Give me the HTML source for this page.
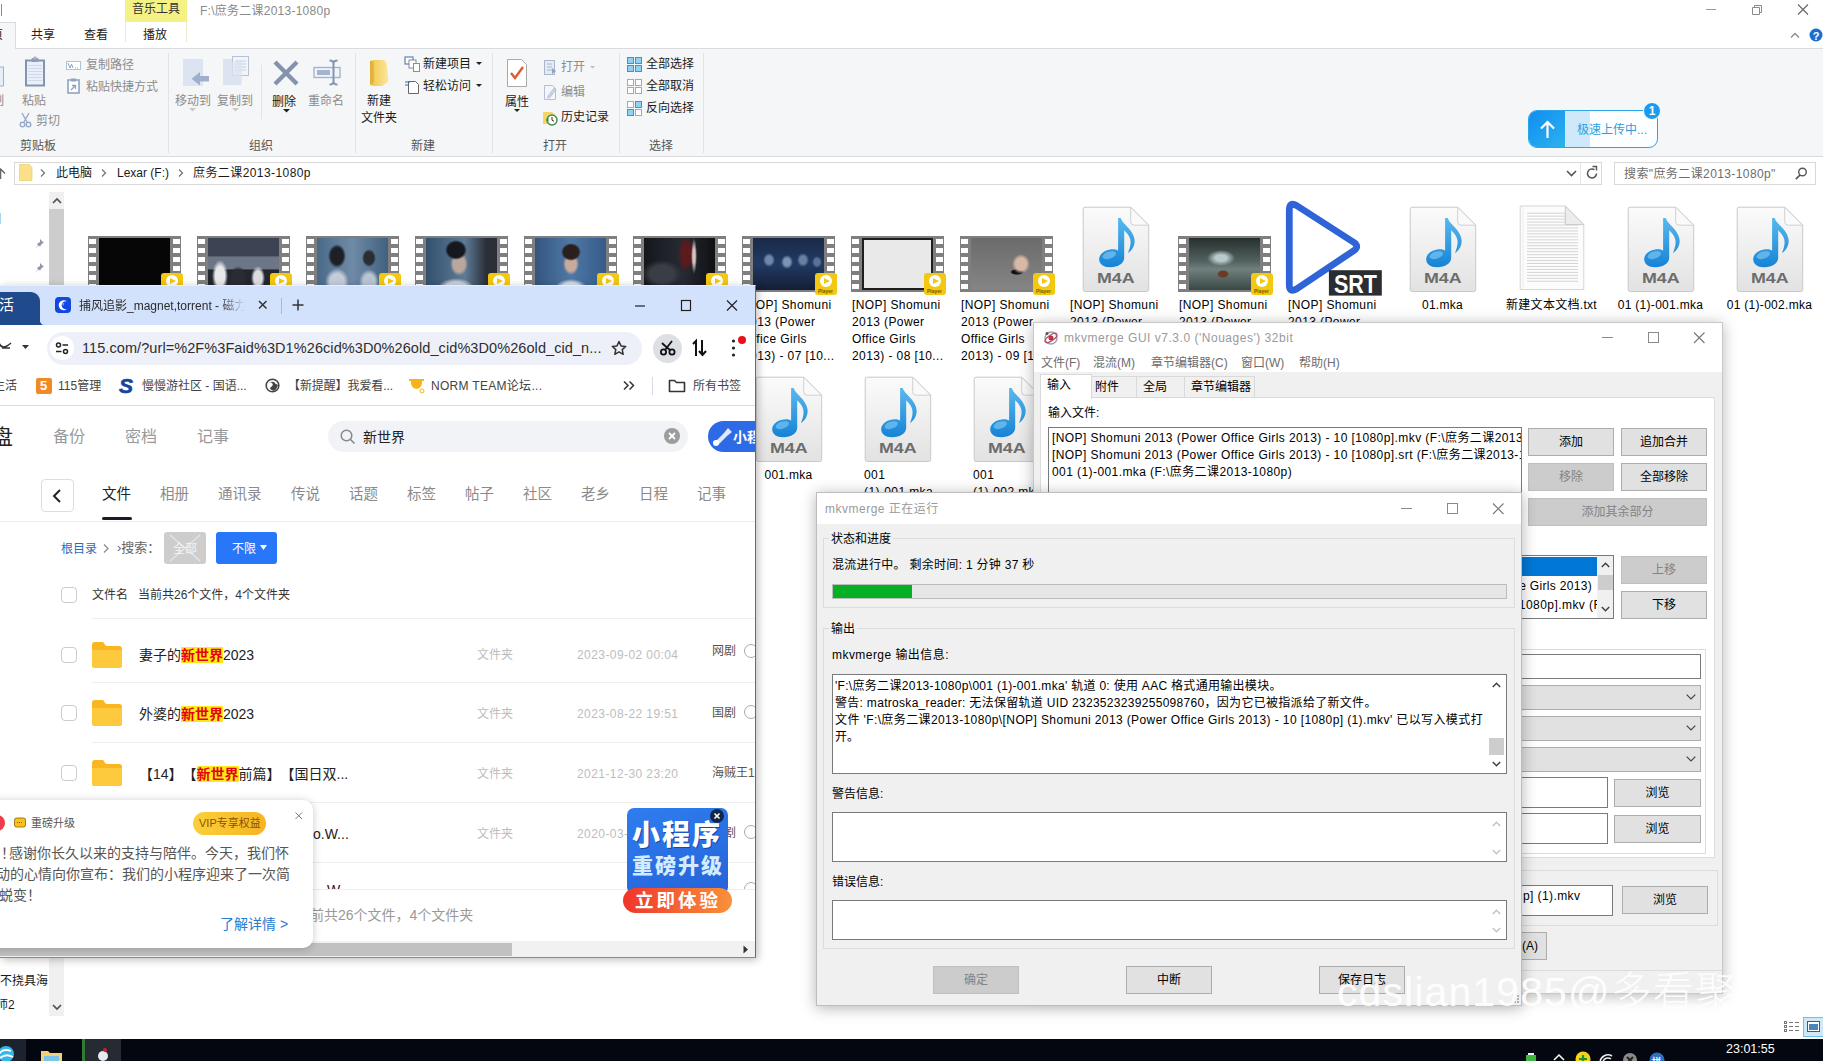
<!DOCTYPE html>
<html lang="zh-CN"><head><meta charset="utf-8"><title>screenshot</title>
<style>
*{box-sizing:border-box;margin:0;padding:0}
html,body{width:1823px;height:1061px;overflow:hidden;background:#fff}
body{position:relative;font-family:"Liberation Sans","Noto Sans CJK SC",sans-serif;font-size:12px;color:#000;line-height:1}
.a{position:absolute}
.t{position:absolute;white-space:nowrap;line-height:16px;height:16px}
.g{color:#8c8c8c}
svg{position:absolute;overflow:visible}
.sep{position:absolute;width:1px;background:#e2e3e4;top:53px;height:100px}
.fl{position:absolute;width:109px;text-align:center;font-size:12px;line-height:17px;color:#000;letter-spacing:.3px}
.fl2{position:absolute;width:96px;text-align:left;font-size:12px;line-height:17px;color:#000;letter-spacing:.4px}
.vt{position:absolute;width:93px;height:56px;background:#7f7f7f}
.vt i{position:absolute;left:11px;top:2px;width:71px;height:52px;display:block}
.vt b{position:absolute;top:0;width:7px;height:56px;background:repeating-linear-gradient(180deg,#7f7f7f 0 3px,#fff 3px 7.800px,#7f7f7f 7.800px 9px)}
.pb{position:absolute;width:22px;height:22px;border-radius:3px;background:#f3c811}
.pb:before{content:"";position:absolute;left:5px;top:2px;width:12px;height:12px;border-radius:50%;background:#fff}
.pb:after{content:"";position:absolute;left:9px;top:5px;border-left:6px solid #f3c811;border-top:3px solid transparent;border-bottom:3px solid transparent}
.btn{position:absolute;background:#e1e1e1;border:1px solid #adadad;text-align:center;font-size:12px;color:#000}
.btn.dis{background:#ccc;border-color:#bfbfbf;color:#838383}
.ct{top:199px;font-size:14.500px;color:#8a8a8a;line-height:18px;height:18px}
.cb{position:absolute;left:61px;width:16px;height:16px;border:1px solid #ccc;border-radius:4px;background:#fff}
.hl{left:92px;width:664px;height:1px;background:#eee}
.fn{left:139px;font-size:14px;color:#222;line-height:20px;height:20px;text-spacing-trim:space-all}
.fn b{background:#ffe81a;color:#e60012;font-weight:bold}
.fk{left:477px;color:#bdbdbd}
.fd{left:577px;color:#bdbdbd;letter-spacing:.42px}
.ic{left:744px;width:14px;height:14px;border-radius:50%;border:1px solid #aaa}
.dd{left:300px;width:364px;height:25px;background:#e1e1e1;border:1px solid #adadad}
</style></head><body>
<svg width="0" height="0" style="position:absolute">
<defs>
<linearGradient id="pg" x1="0" y1="0" x2="0" y2="1"><stop offset="0" stop-color="#fbfbfb"/><stop offset="1" stop-color="#e2e2e2"/></linearGradient>
<linearGradient id="nt" x1="0" y1="0" x2="0" y2="1"><stop offset="0" stop-color="#5ab9ee"/><stop offset="1" stop-color="#1583d6"/></linearGradient>
<symbol id="m4a" viewBox="0 0 68 87">
<g transform="translate(1.200 1.200)">
<path d="M0 2Q0 0 2 0H47.500L65.500 18V82.300Q65.500 84.300 63.500 84.300H2Q0 84.300 0 82.300Z" fill="url(#pg)" stroke="#c9c9c9" stroke-width="1"/>
<path d="M47.500 0L65.500 18H51Q47.500 18 47.500 14.500Z" fill="#fafafa" stroke="#d0d0d0" stroke-width="1"/>
<path d="M34.900 10.800L37.500 10.800C39 17 50 22 51.400 32.500C52 39 48 44 44.800 45.700C47 40 48 36 47 32C46 28 43 25 41 23L41 50.500C41 56 35 60 27 60C20 60 16 56.500 16 52C16 46 23 42 30 42C32 42 34 42.500 34.900 43.500Z" fill="url(#nt)"/>
<ellipse cx="26" cy="48" rx="7" ry="3.500" fill="#8fd2f7" opacity=".55" transform="rotate(-18 26 48)"/>
<text x="13.700" y="76.300" font-family="Liberation Sans,sans-serif" font-weight="bold" font-size="14.400" fill="#6c6c6c" textLength="37.700" lengthAdjust="spacingAndGlyphs">M4A</text>
</g>
</symbol>
<symbol id="fold" viewBox="0 0 30 26">
<path d="M0 3 Q0 0 3 0 H11 L14 4 H27 Q30 4 30 7 V23 Q30 26 27 26 H3 Q0 26 0 23 Z" fill="#f9b621"/>
<path d="M0 8 H30 V23 Q30 26 27 26 H3 Q0 26 0 23 Z" fill="#fdc93d"/>
</symbol>
</defs></svg>
<!-- ================= EXPLORER ================= -->
<div class="a" id="exp" style="left:0;top:0;width:1823px;height:1039px;background:#fff">
<!-- title -->
<div class="a" style="left:125px;top:0;width:62px;height:22px;background:#f4f285"></div>
<div class="t" style="left:132px;top:1px;color:#333">音乐工具</div>
<div class="t" style="left:200px;top:3px;color:#8a8a8a;letter-spacing:.25px">F:\庶务二课2013-1080p</div>
<svg style="left:1706px;top:4px" width="110" height="12"><path d="M0 5.500H10" stroke="#9a9a9a" stroke-width="1" fill="none"/><path d="M46.500 3.500h7v7h-7z M48.500 3.500v-2h7v7h-2" stroke="#8a8a8a" stroke-width="1" fill="none"/><path d="M92 0.500l10 10M102 0.500l-10 10" stroke="#666" stroke-width="1.100" fill="none"/></svg>
<div class="a" style="left:1px;top:4px;width:1px;height:12px;background:#8a8a8a"></div>
<!-- tab row -->
<div class="a" style="left:0;top:22px;width:16px;height:27px;background:#f5f6f7;border:1px solid #dadbdc;border-bottom:none;border-left:none"></div>
<div class="t" style="left:-21px;top:27px;color:#222">主页</div>
<div class="t" style="left:31px;top:27px;color:#222">共享</div>
<div class="t" style="left:84px;top:27px;color:#222">查看</div>
<div class="a" style="left:125px;top:22px;width:62px;height:20px;border-left:1px solid #ebebd2;border-right:1px solid #ebebd2"></div>
<div class="t" style="left:143px;top:27px;color:#222">播放</div>
<svg style="left:1790px;top:28px" width="33" height="16"><path d="M1 9.500l4-4 4 4" stroke="#8a8a8a" stroke-width="1.300" fill="none"/><circle cx="26" cy="7" r="6.500" fill="#1b6ed0"/><text x="26" y="11.500" font-size="11" font-weight="bold" fill="#fff" text-anchor="middle" font-family="Liberation Sans,sans-serif">?</text></svg>
<!-- ribbon body -->
<div class="a" style="left:0;top:48px;width:1823px;height:109px;background:#f5f6f7;border-top:1px solid #dadbdc;border-bottom:1px solid #dadbdc"></div>
<div class="a" style="left:0px;top:48px;width:15px;height:1px;background:#f5f6f7"></div>
<!-- clipboard group -->
<svg style="left:0;top:61px" width="6" height="30"><path d="M0 6h3.500v19H0" fill="#e8eef6" stroke="#9fb0c8" stroke-width="1"/></svg>
<div class="t g" style="left:-8px;top:93px">制</div>
<svg style="left:24px;top:56px" width="24" height="32"><rect x="2" y="4.500" width="18" height="25" fill="#eaf0fa" stroke="#8494b0" stroke-width="2"/><path d="M4 9.500h14M4 12.500h14M4 15.500h14M4 18.500h14M4 21.500h14M4 24.500h14" stroke="#cfd9ea" stroke-width="1"/><rect x="7.500" y="2" width="7" height="4" rx="1" fill="#8e9cb6"/><rect x="9.500" y=".5" width="3" height="3" rx="1" fill="#a9b4c8"/></svg>
<div class="t g" style="left:22px;top:93px">粘贴</div>
<svg style="left:66px;top:59px" width="16" height="12"><rect x="0.500" y="2.500" width="14" height="8" fill="#fff" stroke="#b4c0d4"/><path d="M2 4l2 5 1.500-4L7 9M9 9h1M11 9h1" stroke="#8fa3c3" stroke-width="1" fill="none"/></svg>
<div class="t g" style="left:86px;top:57px">复制路径</div>
<svg style="left:67px;top:78px" width="14" height="16"><rect x="1" y="2" width="11" height="13" fill="#fff" stroke="#8fa3c3" stroke-width="1.600"/><rect x="4" y="0.500" width="5" height="3" fill="#8fa3c3"/><path d="M4 12l4-4M5 7.500h3.500V11" stroke="#8fa3c3" stroke-width="1.300" fill="none"/></svg>
<div class="t g" style="left:86px;top:79px">粘贴快捷方式</div>
<svg style="left:19px;top:112px" width="13" height="17"><path d="M3 1l5 9M10 1L5 10" stroke="#9aabc7" stroke-width="1.400" fill="none"/><circle cx="3.500" cy="12.500" r="2.300" fill="none" stroke="#9aabc7" stroke-width="1.400"/><circle cx="9.500" cy="12.500" r="2.300" fill="none" stroke="#9aabc7" stroke-width="1.400"/></svg>
<div class="t g" style="left:36px;top:113px">剪切</div>
<div class="t" style="left:20px;top:138px;color:#555">剪贴板</div>
<div class="sep" style="left:168px"></div>
<!-- organize group -->
<svg style="left:182px;top:58px" width="30" height="32"><rect x="1" y="1" width="20" height="27" fill="#dce4f1"/><path d="M27 23.500v-5.500h-9v-4l-8.500 6.800 8.500 6.800v-4.100z" fill="#9fb0cc"/></svg>
<div class="t g" style="left:175px;top:93px">移动到</div>
<svg style="left:189px;top:108px" width="8" height="4"><path d="M0 0h7L3.500 3.500z" fill="#c8c8c8"/></svg>
<svg style="left:222px;top:56px" width="30" height="32"><rect x="1" y="3" width="18" height="26" fill="#dce4f1"/><rect x="10.500" y="0.500" width="16" height="19" fill="#f1f4f9" stroke="#b5c2d8"/><path d="M13 5h11M13 8h11M13 11h11M13 14h11" stroke="#c5d0e2"/><rect x="6" y="6" width="14" height="22" fill="#dce4f1" opacity=".7"/></svg>
<div class="t g" style="left:217px;top:93px">复制到</div>
<svg style="left:232px;top:108px" width="8" height="4"><path d="M0 0h7L3.500 3.500z" fill="#c8c8c8"/></svg>
<div class="a" style="left:261px;top:65px;width:1px;height:54px;background:#e2e3e4"></div>
<svg style="left:273px;top:60px" width="26" height="26"><path d="M2 2l22 22M24 2L2 24" stroke="#8492ad" stroke-width="4.300" fill="none"/></svg>
<div class="t" style="left:272px;top:94px;color:#1a1a1a">删除</div>
<svg style="left:283px;top:109px" width="8" height="4"><path d="M0 0h7L3.500 3.500z" fill="#222"/></svg>
<svg style="left:313px;top:59px" width="30" height="28"><rect x="1" y="8.500" width="26" height="10" fill="#f1f4f9" stroke="#a4b4d0" stroke-width="1.400"/><rect x="4" y="11" width="13" height="5" fill="#a4b4d0"/><path d="M16.500 1.500q4 0 4 3v18q0 3-4 3M24.500 1.500q-4 0-4 3v18q0 3 4 3" stroke="#8794ad" stroke-width="2" fill="none"/></svg>
<div class="t g" style="left:308px;top:93px">重命名</div>
<div class="t" style="left:249px;top:138px;color:#555">组织</div>
<div class="sep" style="left:355px"></div>
<!-- new group -->
<svg style="left:367px;top:58px" width="24" height="30"><defs><linearGradient id="nf" x1="0" y1="0" x2="1" y2="0"><stop offset="0" stop-color="#f3cb55"/><stop offset="1" stop-color="#fbe7a0"/></linearGradient></defs><path d="M4 2.500h12l2 2v19l-3 4H4z" fill="#e9bf4d"/><path d="M6 2h11l2.500 2.500 2 19-6.500 4.500H6l1.500-4z" fill="url(#nf)"/><path d="M3 2.500l3.500 2v19l-3.500 4z" fill="#e2b23a"/></svg>
<div class="t" style="left:367px;top:93px;color:#1a1a1a">新建</div>
<div class="t" style="left:361px;top:110px;color:#1a1a1a">文件夹</div>
<svg style="left:404px;top:56px" width="17" height="16"><rect x="1" y="1" width="8" height="7" fill="#fff" stroke="#5b83b8" stroke-width="1.200"/><rect x="5" y="4" width="7" height="8" fill="#fff" stroke="#8a8a8a"/><rect x="9.500" y="7.500" width="6" height="8" fill="#fff" stroke="#c47a6a"/></svg>
<div class="t" style="left:423px;top:56px;color:#1a1a1a">新建项目</div>
<svg style="left:476px;top:62px" width="8" height="4"><path d="M0 0h6L3 3z" fill="#222"/></svg>
<svg style="left:404px;top:78px" width="17" height="17"><path d="M4.500 3.500h7l3 3v9h-10z" fill="#fff" stroke="#666"/><path d="M1 4h5M1 7h4" stroke="#3a66a8" stroke-width="1.200"/></svg>
<div class="t" style="left:423px;top:78px;color:#1a1a1a">轻松访问</div>
<svg style="left:476px;top:84px" width="8" height="4"><path d="M0 0h6L3 3z" fill="#222"/></svg>
<div class="t" style="left:411px;top:138px;color:#555">新建</div>
<div class="sep" style="left:492px"></div>
<!-- open group -->
<svg style="left:505px;top:57px" width="24" height="32"><path d="M2.500 2.500h14l5 5v22h-19z" fill="#fff" stroke="#a9a9a9"/><path d="M6 16l4 5 8-11" stroke="#e05a2b" stroke-width="2.400" fill="none"/></svg>
<div class="t" style="left:505px;top:94px;color:#1a1a1a">属性</div>
<svg style="left:514px;top:109px" width="8" height="4"><path d="M0 0h6L3 3z" fill="#222"/></svg>
<svg style="left:543px;top:59px" width="15" height="17"><rect x="1.500" y="1.500" width="10" height="14" fill="#e6ebf3" stroke="#a9b6cc"/><path d="M4 5h5M4 8h5M4 11h5" stroke="#a9b6cc"/><path d="M9 9l4 3-4 3z" fill="#8fa3c3"/></svg>
<div class="t g" style="left:561px;top:59px">打开</div>
<svg style="left:590px;top:66px" width="7" height="4"><path d="M0 0h5L2.500 2.500z" fill="#bbb"/></svg>
<svg style="left:543px;top:84px" width="15" height="17"><path d="M1.500 1.500h8l3 3v11h-11z" fill="#f3f5f9" stroke="#b5c0d4"/><path d="M5 12l6-8 2 1.500-6 8-2.500.500z" fill="#c9d3e4" stroke="#a9b6cc" stroke-width=".6"/></svg>
<div class="t g" style="left:561px;top:84px">编辑</div>
<svg style="left:542px;top:109px" width="17" height="17"><path d="M1 3h9l3 3v9H1z" fill="#f6d566"/><circle cx="10" cy="11" r="5" fill="#fff" stroke="#3e8e41" stroke-width="1.400"/><path d="M10 8v3.200l2 1" stroke="#333" stroke-width="1" fill="none"/><path d="M4 11l2.500-2v4z" fill="#3e8e41"/></svg>
<div class="t" style="left:561px;top:109px;color:#1a1a1a">历史记录</div>
<div class="t" style="left:543px;top:138px;color:#555">打开</div>
<div class="sep" style="left:619px"></div>
<!-- select group -->
<svg style="left:627px;top:57px" width="16" height="15"><g fill="#8fd3f4" stroke="#2b9cd8"><rect x=".5" y=".5" width="6" height="6"/><rect x="8.500" y=".5" width="6" height="6"/><rect x=".5" y="8.500" width="6" height="6"/><rect x="8.500" y="8.500" width="6" height="6"/></g></svg>
<div class="t" style="left:646px;top:56px;color:#1a1a1a">全部选择</div>
<svg style="left:627px;top:79px" width="16" height="15"><g fill="#fff" stroke="#a8a8a8"><rect x=".5" y=".5" width="6" height="6"/><rect x="8.500" y=".5" width="6" height="6"/><rect x=".5" y="8.500" width="6" height="6"/><rect x="8.500" y="8.500" width="6" height="6"/></g></svg>
<div class="t" style="left:646px;top:78px;color:#1a1a1a">全部取消</div>
<svg style="left:627px;top:101px" width="16" height="15"><g stroke="#2b9cd8"><rect x=".5" y=".5" width="6" height="6" fill="#fff" stroke="#a8a8a8"/><rect x="8.500" y=".5" width="6" height="6" fill="#8fd3f4"/><rect x=".5" y="8.500" width="6" height="6" fill="#8fd3f4"/><rect x="8.500" y="8.500" width="6" height="6" fill="#fff" stroke="#a8a8a8"/></g></svg>
<div class="t" style="left:646px;top:100px;color:#1a1a1a">反向选择</div>
<div class="t" style="left:649px;top:138px;color:#555">选择</div>
<div class="sep" style="left:703px"></div>
<!-- upload pill -->
<div class="a" style="left:1528px;top:110px;width:130px;height:38px;border-radius:9px;border:1px solid #2aa4ea;background:linear-gradient(90deg,#cfe9fb 0 61px,#fdfeff 61px);overflow:hidden"><div class="a" style="left:-1px;top:-1px;width:37px;height:38px;background:linear-gradient(135deg,#0e8df0,#2fb2ee)"></div>
<svg style="left:10px;top:9px" width="17" height="19"><path d="M8.500 18V2M2 8.500L8.500 2 15 8.500" stroke="#fff" stroke-width="2.200" fill="none"/></svg>
<div class="t" style="left:48px;top:11px;color:#2a9fe3;font-size:12px">极速上传中...</div></div>
<div class="a" style="left:1643px;top:102px;width:18px;height:18px;border-radius:50%;background:#1a9af0;border:1px solid #fff;color:#fff;font-size:12px;font-weight:bold;text-align:center;line-height:16px">1</div>
<!-- address bar -->
<svg style="left:-3px;top:166px" width="10" height="14"><path d="M3.500 13V3M-1 7.500L3.500 3 8 7.500" stroke="#666" stroke-width="1.500" fill="none"/></svg>
<div class="a" style="left:14px;top:162px;width:1588px;height:23px;border:1px solid #d9d9d9;background:#fff"></div>
<div class="a" style="left:1580px;top:163px;width:1px;height:21px;background:#e5e5e5"></div>
<svg style="left:19px;top:164px" width="14" height="17"><path d="M.5.500h10l2.500 3v13H.5z" fill="#fbe08b" stroke="#e8c75f" stroke-width=".6"/></svg>
<svg style="left:40px;top:169px" width="6" height="8"><path d="M1 .5l3.500 3.500L1 7.500" stroke="#777" stroke-width="1.300" fill="none"/></svg>
<div class="t" style="left:56px;top:165px;color:#1a1a1a">此电脑</div>
<svg style="left:101px;top:169px" width="6" height="8"><path d="M1 .5l3.500 3.500L1 7.500" stroke="#777" stroke-width="1.300" fill="none"/></svg>
<div class="t" style="left:117px;top:165px;color:#1a1a1a">Lexar (F:)</div>
<svg style="left:178px;top:169px" width="6" height="8"><path d="M1 .5l3.500 3.500L1 7.500" stroke="#777" stroke-width="1.300" fill="none"/></svg>
<div class="t" style="left:193px;top:165px;color:#1a1a1a;letter-spacing:.42px">庶务二课2013-1080p</div>
<svg style="left:1566px;top:170px" width="11" height="8"><path d="M1 1l4.500 4.500L10 1" stroke="#555" stroke-width="1.600" fill="none"/></svg>
<svg style="left:1586px;top:166px" width="13" height="14"><path d="M10.500 7.500a4.500 4.500 0 1 1-2-3.800" stroke="#555" stroke-width="1.500" fill="none"/><path d="M6.500.5h4v4" stroke="#555" stroke-width="1.400" fill="none"/></svg>
<div class="a" style="left:1614px;top:162px;width:202px;height:23px;border:1px solid #d9d9d9;background:#fff"></div>
<div class="t" style="left:1624px;top:166px;color:#6d6d6d;letter-spacing:.4px">搜索"庶务二课2013-1080p"</div>
<svg style="left:1795px;top:167px" width="13" height="13"><circle cx="7.500" cy="5" r="3.800" stroke="#555" stroke-width="1.400" fill="none"/><path d="M5 8L.8 12.200" stroke="#555" stroke-width="1.700"/></svg>
<!-- nav pane -->
<div class="a" style="left:49px;top:192px;width:15px;height:824px;background:#f0f0f0"></div>
<div class="a" style="left:49px;top:209px;width:15px;height:90px;background:#cdcdcd"></div>
<svg style="left:52px;top:197px" width="10" height="7"><path d="M1 6l4-4 4 4" stroke="#505050" stroke-width="1.700" fill="none"/></svg>
<svg style="left:52px;top:1004px" width="10" height="7"><path d="M1 1l4 4 4-4" stroke="#505050" stroke-width="1.700" fill="none"/></svg>
<div class="a" style="left:0;top:213px;width:1px;height:11px;background:#a5d8ee"></div>
<svg style="left:34px;top:238px" width="11" height="36"><g fill="#8d96a3"><path d="M6 1l4 4-2 .5-2 3-1.500-1L1 11l3-3.500-1-1.500 3-2z"/><path d="M6 25l4 4-2 .5-2 3-1.500-1L1 35l3-3.500-1-1.500 3-2z"/></g></svg>
<div class="t" style="left:-12px;top:972.500px;color:#1a1a1a">不不挠具海</div>
<div class="t" style="left:-4px;top:996.500px;color:#1a1a1a">师2</div>
<!-- status bar icons -->
<svg style="left:1783px;top:1017px" width="40" height="20"><rect x="20.500" y=".5" width="20" height="19" fill="#cfe8f8" stroke="#70c0e7"/><g stroke="#777" fill="none"><rect x="1.500" y="4.500" width="2" height="2"/><rect x="1.500" y="8.500" width="2" height="2"/><rect x="1.500" y="12.500" width="2" height="2"/><path d="M6 5.500h4M12 5.500h4M6 9.500h4M12 9.500h4M6 13.500h4M12 13.500h4"/></g><rect x="24.500" y="4.500" width="12" height="10" fill="#fff" stroke="#555"/><rect x="26" y="7" width="9" height="6" fill="#4a86b8"/></svg>
<!-- files -->
<div class="vt" style="left:88px;top:236px"><b style="left:1px"></b><b style="right:1px"></b><i style="background:#060606"></i></div>
<div class="pb" style="left:161px;top:273px"></div><div class="t" style="left:164px;top:288px;font-size:5px;line-height:6px;height:6px;font-weight:bold;color:#7a5a00">Player</div>
<div class="vt" style="left:197px;top:236px"><b style="left:1px"></b><b style="right:1px"></b><i style="background:radial-gradient(ellipse 8px 16px at 12px 38px,#e8e8ea 60%,transparent),radial-gradient(ellipse 7px 12px at 50px 40px,#dcdcdf 60%,transparent),radial-gradient(ellipse 9px 14px at 30px 42px,#2a2c33 70%,transparent),linear-gradient(180deg,#3c4352 0 35%,#6d7686 36% 60%,#23262d 61%)"></i></div>
<div class="pb" style="left:270px;top:273px"></div><div class="t" style="left:273px;top:288px;font-size:5px;line-height:6px;height:6px;font-weight:bold;color:#7a5a00">Player</div>
<div class="vt" style="left:306px;top:236px"><b style="left:1px"></b><b style="right:1px"></b><i style="background:radial-gradient(ellipse 9px 12px at 20px 18px,#1d2026 70%,transparent),radial-gradient(ellipse 12px 14px at 20px 44px,#c3ccd8 60%,transparent),radial-gradient(ellipse 7px 9px at 52px 20px,#2a2d34 70%,transparent),radial-gradient(ellipse 10px 13px at 52px 44px,#b8c4d2 60%,transparent),linear-gradient(90deg,#4a6a8a,#6f8aa6 50%,#41607f)"></i></div>
<div class="pb" style="left:379px;top:273px"></div><div class="t" style="left:382px;top:288px;font-size:5px;line-height:6px;height:6px;font-weight:bold;color:#7a5a00">Player</div>
<div class="vt" style="left:415px;top:236px"><b style="left:1px"></b><b style="right:1px"></b><i style="background:radial-gradient(ellipse 11px 10px at 30px 12px,#15181e 75%,transparent),radial-gradient(ellipse 9px 12px at 33px 26px,#b9a79c 65%,transparent),radial-gradient(ellipse 18px 10px at 30px 50px,#c9d2dc 60%,transparent),linear-gradient(90deg,#33506e,#5d7a96 55%,#2b2f38 85%)"></i></div>
<div class="pb" style="left:488px;top:273px"></div><div class="t" style="left:491px;top:288px;font-size:5px;line-height:6px;height:6px;font-weight:bold;color:#7a5a00">Player</div>
<div class="vt" style="left:524px;top:236px"><b style="left:1px"></b><b style="right:1px"></b><i style="background:radial-gradient(ellipse 10px 9px at 36px 14px,#2a1f1c 75%,transparent),radial-gradient(ellipse 8px 11px at 36px 26px,#c9ab9c 65%,transparent),radial-gradient(ellipse 16px 9px at 36px 50px,#d6dde6 60%,transparent),linear-gradient(90deg,#34557f,#4f78a6 50%,#365b88)"></i></div>
<div class="pb" style="left:597px;top:273px"></div><div class="t" style="left:600px;top:288px;font-size:5px;line-height:6px;height:6px;font-weight:bold;color:#7a5a00">Player</div>
<div class="vt" style="left:633px;top:236px"><b style="left:1px"></b><b style="right:1px"></b><i style="background:radial-gradient(ellipse 3px 18px at 50px 18px,#d9c3c0 40%,transparent),radial-gradient(ellipse 8px 18px at 42px 16px,#5a1a1e 60%,transparent),radial-gradient(ellipse 20px 14px at 18px 36px,#3a3d45 60%,transparent),linear-gradient(90deg,#15171c,#262a33 55%,#0f1013)"></i></div>
<div class="pb" style="left:706px;top:273px"></div><div class="t" style="left:709px;top:288px;font-size:5px;line-height:6px;height:6px;font-weight:bold;color:#7a5a00">Player</div>
<div class="vt" style="left:742px;top:236px"><b style="left:1px"></b><b style="right:1px"></b><i style="background:radial-gradient(ellipse 6px 7px at 16px 22px,#6f86a8 55%,transparent),radial-gradient(ellipse 6px 7px at 34px 24px,#7d93b3 55%,transparent),radial-gradient(ellipse 6px 7px at 50px 22px,#6a80a3 55%,transparent),radial-gradient(ellipse 5px 6px at 64px 24px,#5b7297 55%,transparent),linear-gradient(180deg,#1a2a48,#223a63 50%,#131e36)"></i></div>
<div class="pb" style="left:815px;top:273px"></div><div class="t" style="left:818px;top:288px;font-size:5px;line-height:6px;height:6px;font-weight:bold;color:#7a5a00">Player</div>
<div class="vt" style="left:851px;top:236px"><b style="left:1px"></b><b style="right:1px"></b><i style="background:#e9e9e9;outline:2px solid #1e1e1e;outline-offset:-2px"></i></div>
<div class="pb" style="left:924px;top:273px"></div><div class="t" style="left:927px;top:288px;font-size:5px;line-height:6px;height:6px;font-weight:bold;color:#7a5a00">Player</div>
<div class="vt" style="left:960px;top:236px"><b style="left:1px"></b><b style="right:1px"></b><i style="background:radial-gradient(ellipse 9px 10px at 50px 26px,#d9b9a6 60%,transparent),radial-gradient(ellipse 7px 3px at 46px 34px,#111 70%,transparent),linear-gradient(180deg,#6b6b6b,#858585)"></i></div>
<div class="pb" style="left:1033px;top:273px"></div><div class="t" style="left:1036px;top:288px;font-size:5px;line-height:6px;height:6px;font-weight:bold;color:#7a5a00">Player</div>
<div class="vt" style="left:1178px;top:236px"><b style="left:1px"></b><b style="right:1px"></b><i style="background:radial-gradient(ellipse 14px 8px at 32px 20px,#b9c9cc 40%,transparent),radial-gradient(ellipse 6px 4px at 34px 36px,#6a3a22 70%,transparent),linear-gradient(180deg,#26302f,#52625f 45%,#6f807e 60%,#3a4745)"></i></div>
<div class="pb" style="left:1251px;top:273px"></div><div class="t" style="left:1254px;top:288px;font-size:5px;line-height:6px;height:6px;font-weight:bold;color:#7a5a00">Player</div>
<svg style="left:1082px;top:206px" width="68" height="87"><use href="#m4a"/></svg>
<svg style="left:1409px;top:206px" width="68" height="87"><use href="#m4a"/></svg>
<svg style="left:1627px;top:206px" width="68" height="87"><use href="#m4a"/></svg>
<svg style="left:1736px;top:206px" width="68" height="87"><use href="#m4a"/></svg>
<svg style="left:1519px;top:205px" width="68" height="87"><path d="M1.200 1H46.300L64.800 19.600V84.600H1.200Z" fill="#fcfcfc" stroke="#d2d5d9"/><path d="M4 1V84.600" stroke="#ececec"/><path d="M8 8.20h44M8 11.16h44M8 14.12h44M8 17.08h44M8 20.04h51M8 23.00h51M8 25.96h51M8 28.92h51M8 31.88h51M8 34.84h51M8 37.80h51M8 40.76h51M8 43.72h51M8 46.68h51M8 49.64h51M8 52.60h51M8 55.56h51M8 58.52h51M8 61.48h51M8 64.44h51M8 67.40h51M8 70.36h51M8 73.32h51M8 76.28h51" stroke="#d4d4d4" stroke-width="1"/><path d="M46.300 1L64.800 19.600H46.300Z" fill="#ececec" stroke="#c9c9c9"/></svg>
<svg style="left:1284px;top:198px" width="100" height="100"><path d="M5.300 12Q5.300 3.500 12.500 7.500L70 44.500Q75.500 48.500 70 52.500L12.500 91Q5.300 95 5.300 87Z" fill="#fff" stroke="#2f63d8" stroke-width="6.800" stroke-linejoin="round"/><rect x="44.900" y="72.200" width="52.900" height="25.400" fill="#2a2e32"/><text x="50" y="95" font-family="Liberation Sans,sans-serif" font-weight="bold" font-size="26.500" fill="#fff" textLength="43" lengthAdjust="spacingAndGlyphs">SRT</text></svg>
<div class="fl2" style="left:634px;top:297px;white-space:nowrap"><div>[NOP] Shomuni</div><div>2013 (Power</div><div>Office Girls</div><div>2013) - 06 [10...</div></div>
<div class="fl2" style="left:743px;top:297px;white-space:nowrap"><div>[NOP] Shomuni</div><div>2013 (Power</div><div>Office Girls</div><div>2013) - 07 [10...</div></div>
<div class="fl2" style="left:852px;top:297px;white-space:nowrap"><div>[NOP] Shomuni</div><div>2013 (Power</div><div>Office Girls</div><div>2013) - 08 [10...</div></div>
<div class="fl2" style="left:961px;top:297px;white-space:nowrap"><div>[NOP] Shomuni</div><div>2013 (Power</div><div>Office Girls</div><div>2013) - 09 [10...</div></div>
<div class="fl2" style="left:1070px;top:297px;white-space:nowrap"><div>[NOP] Shomuni</div><div>2013 (Power</div><div>Office Girls</div><div>2013) - 10 [10...</div></div>
<div class="fl2" style="left:1179px;top:297px;white-space:nowrap"><div>[NOP] Shomuni</div><div>2013 (Power</div><div>Office Girls</div><div>2013) - 10 [10...</div></div>
<div class="fl2" style="left:1288px;top:297px;white-space:nowrap"><div>[NOP] Shomuni</div><div>2013 (Power</div><div>Office Girls</div><div>2013) - 10 [10...</div></div>
<div class="fl" style="left:1388px;top:297px;white-space:nowrap">01.mka</div>
<div class="fl" style="left:1497px;top:297px;white-space:nowrap">新建文本文档.txt</div>
<div class="fl" style="left:1606px;top:297px;white-space:nowrap">01 (1)-001.mka</div>
<div class="fl" style="left:1715px;top:297px;white-space:nowrap">01 (1)-002.mka</div>
<svg style="left:755px;top:376px" width="68" height="87"><use href="#m4a"/></svg>
<svg style="left:864px;top:376px" width="68" height="87"><use href="#m4a"/></svg>
<svg style="left:973px;top:376px" width="68" height="87"><use href="#m4a"/></svg>
<div class="fl" style="left:734px;top:467px;white-space:nowrap">001.mka</div>
<div class="fl2" style="left:864px;top:467px;white-space:nowrap"><div>001</div><div>(1)-001.mka</div></div>
<div class="fl2" style="left:973px;top:467px;white-space:nowrap"><div>001</div><div>(1)-002.mka</div></div>
</div>
<!-- ================= MKVMERGE GUI ================= -->
<div class="a" id="mkv" style="left:1033px;top:322px;width:690px;height:672px;background:#f0f0f0;border:1px solid #c8c8c8;box-shadow:0 2px 14px rgba(0,0,0,.28);overflow:hidden">
<div class="a" style="left:0;top:0;width:690px;height:49px;background:#fff"></div>
<div class="a" style="left:3px;top:0;width:687px;height:672px">
<svg style="left:6px;top:7px" width="16" height="16"><circle cx="8" cy="8" r="6" fill="none" stroke="#9aa0b8" stroke-width="1.400"/><ellipse cx="8" cy="8" rx="7" ry="2.800" fill="none" stroke="#b04a5a" stroke-width="1.200" transform="rotate(-35 8 8)"/><circle cx="8" cy="8" r="2.500" fill="#c03040"/><circle cx="4" cy="3.500" r="1.500" fill="#555"/></svg>
<div class="t" style="left:27px;top:7px;color:#9a9a9a;letter-spacing:.52px">mkvmerge GUI v7.3.0 ('Nouages') 32bit</div>
<svg style="left:565px;top:9px" width="106" height="12"><path d="M0 5.500h11" stroke="#8a8a8a"/><rect x="46.500" y=".5" width="10" height="10" fill="none" stroke="#8a8a8a"/><path d="M92 .5l10.500 10.500M102.500.5L92 11" stroke="#777" stroke-width="1.100"/></svg>
<div class="t" style="left:4px;top:32px;color:#6d6d6d">文件(F)</div>
<div class="t" style="left:56px;top:32px;color:#6d6d6d">混流(M)</div>
<div class="t" style="left:114px;top:32px;color:#6d6d6d">章节编辑器(C)</div>
<div class="t" style="left:204px;top:32px;color:#6d6d6d">窗口(W)</div>
<div class="t" style="left:262px;top:32px;color:#6d6d6d">帮助(H)</div>
<!-- tab page -->
<div class="a" style="left:3px;top:74px;width:675px;height:461px;background:#fff;border:1px solid #dcdcdc"></div>
<div class="a" style="left:54px;top:53px;width:46px;height:22px;background:#f0f0f0;border:1px solid #d9d9d9"></div>
<div class="a" style="left:99px;top:53px;width:49px;height:22px;background:#f0f0f0;border:1px solid #d9d9d9"></div>
<div class="a" style="left:147px;top:53px;width:71px;height:22px;background:#f0f0f0;border:1px solid #d9d9d9"></div>
<div class="a" style="left:3px;top:51px;width:52px;height:25px;background:#fff;border:1px solid #d9d9d9;border-bottom:none"></div>
<div class="t" style="left:10px;top:54px">输入</div>
<div class="t" style="left:58px;top:56px">附件</div>
<div class="t" style="left:106px;top:56px">全局</div>
<div class="t" style="left:154px;top:56px">章节编辑器</div>
<div class="t" style="left:11px;top:82px">输入文件:</div>
<div class="a" style="left:11px;top:104px;width:474px;height:80px;background:#fff;border:1px solid #7a7a7a;overflow:hidden">
<div class="t" style="left:3px;top:2px;letter-spacing:.42px">[NOP] Shomuni 2013 (Power Office Girls 2013) - 10 [1080p].mkv (F:\庶务二课2013-1080p)</div>
<div class="t" style="left:3px;top:19px;letter-spacing:.42px">[NOP] Shomuni 2013 (Power Office Girls 2013) - 10 [1080p].srt (F:\庶务二课2013-1080p)</div>
<div class="t" style="left:3px;top:36px;letter-spacing:.42px">001 (1)-001.mka (F:\庶务二课2013-1080p)</div>
</div>
<div class="btn" style="left:491px;top:105px;width:86px;height:28px;line-height:26px">添加</div>
<div class="btn" style="left:584px;top:105px;width:86px;height:28px;line-height:26px">追加合并</div>
<div class="btn dis" style="left:491px;top:140px;width:86px;height:28px;line-height:26px">移除</div>
<div class="btn" style="left:584px;top:140px;width:86px;height:28px;line-height:26px">全部移除</div>
<div class="btn dis" style="left:491px;top:175px;width:179px;height:28px;line-height:26px">添加其余部分</div>
<!-- track list -->
<div class="a" style="left:300px;top:232px;width:277px;height:64px;background:#fff;border:1px solid #7a7a7a;overflow:hidden">
<div class="a" style="left:0;top:1px;width:259px;height:19px;background:#0078d7"></div>
<div class="t" style="right:21px;top:22px;letter-spacing:.32px">(Power Office Girls 2013)</div>
<div class="t" style="left:177px;top:41px;letter-spacing:.45px">[1080p].mkv (F:\庶</div>
<div class="a" style="left:259px;top:0;width:17px;height:62px;background:#f0f0f0"></div>
<div class="a" style="left:260px;top:19px;width:15px;height:15px;background:#cdcdcd"></div>
<svg style="left:263px;top:6px" width="9" height="6"><path d="M.8 5l3.700-3.700L8.200 5" stroke="#404040" stroke-width="1.500" fill="none"/></svg>
<svg style="left:263px;top:50px" width="9" height="6"><path d="M.8 1l3.700 3.700L8.200 1" stroke="#404040" stroke-width="1.500" fill="none"/></svg>
</div>
<div class="btn dis" style="left:584px;top:233px;width:86px;height:28px;line-height:26px">上移</div>
<div class="btn" style="left:584px;top:268px;width:86px;height:28px;line-height:26px">下移</div>
<!-- options group -->
<div class="a" style="left:300px;top:326px;width:369px;height:205px;border:1px solid #dcdcdc"></div>
<div class="a" style="left:300px;top:331px;width:364px;height:25px;background:#fff;border:1px solid #7a7a7a"></div>
<div class="a dd" style="top:362px"></div><div class="a dd" style="top:393px"></div><div class="a dd" style="top:424px"></div>
<svg style="left:649px;top:371px" width="10" height="6"><path d="M.7.700l4.300 4.300L9.300.7" stroke="#444" stroke-width="1.200" fill="none"/></svg>
<svg style="left:649px;top:402px" width="10" height="6"><path d="M.7.700l4.300 4.300L9.300.7" stroke="#444" stroke-width="1.200" fill="none"/></svg>
<svg style="left:649px;top:433px" width="10" height="6"><path d="M.7.700l4.300 4.300L9.300.7" stroke="#444" stroke-width="1.200" fill="none"/></svg>
<div class="a" style="left:300px;top:454px;width:271px;height:31px;background:#fff;border:1px solid #7a7a7a"></div>
<div class="btn" style="left:577px;top:456px;width:87px;height:28px;line-height:26px">浏览</div>
<div class="a" style="left:300px;top:490px;width:271px;height:31px;background:#fff;border:1px solid #7a7a7a"></div>
<div class="btn" style="left:577px;top:492px;width:87px;height:28px;line-height:26px">浏览</div>
<!-- output group -->
<div class="a" style="left:300px;top:547px;width:381px;height:56px;border:1px solid #dcdcdc"></div>
<div class="a" style="left:300px;top:562px;width:276px;height:31px;background:#fff;border:1px solid #7a7a7a"></div>
<div class="t" style="left:486px;top:565px;letter-spacing:.4px">p] (1).mkv</div>
<div class="btn" style="left:585px;top:563px;width:86px;height:28px;line-height:26px">浏览</div>
<div class="btn" style="left:440px;top:609px;width:70px;height:28px;line-height:26px;text-align:right;padding-right:8px">(A)</div>
<div class="a" style="left:-3px;top:647px;width:690px;height:1px;background:#dcdcdc"></div>
</div>
</div>
<!-- ================= PROGRESS DIALOG ================= -->
<div class="a" id="dlg" style="left:816px;top:492px;width:706px;height:514px;background:#f0f0f0;border:1px solid #bdbdbd;box-shadow:0 2px 14px rgba(0,0,0,.3);overflow:hidden">
<div class="a" style="left:0;top:0;width:706px;height:31px;background:#fff"></div>
<div class="t" style="left:8px;top:8px;color:#9a9a9a;letter-spacing:.5px">mkvmerge 正在运行</div>
<svg style="left:584px;top:10px" width="106" height="12"><path d="M0 5.500h11" stroke="#8a8a8a"/><rect x="46.500" y=".5" width="10" height="10" fill="none" stroke="#8a8a8a"/><path d="M92 .5l10.500 10.500M102.500.5L92 11" stroke="#777" stroke-width="1.100"/></svg>
<div class="a" style="left:6px;top:45px;width:692px;height:70px;border:1px solid #dcdcdc"></div>
<div class="t" style="left:12px;top:38px;background:#f0f0f0;padding:0 2px">状态和进度</div>
<div class="t" style="left:15px;top:64px;letter-spacing:.3px">混流进行中。 剩余时间: 1 分钟 37 秒</div>
<div class="a" style="left:15px;top:91px;width:675px;height:15px;background:#e6e6e6;border:1px solid #bcbcbc"></div>
<div class="a" style="left:16px;top:92px;width:79px;height:13px;background:#06b025"></div>
<div class="a" style="left:6px;top:135px;width:692px;height:321px;border:1px solid #dcdcdc"></div>
<div class="t" style="left:12px;top:128px;background:#f0f0f0;padding:0 2px">输出</div>
<div class="t" style="left:15px;top:154px;letter-spacing:.45px">mkvmerge 输出信息:</div>
<div class="a" style="left:15px;top:181px;width:675px;height:100px;background:#fff;border:1px solid #7a7a7a;overflow:hidden">
<div class="t" style="left:2px;top:3px;letter-spacing:.3px">'F:\庶务二课2013-1080p\001 (1)-001.mka' 轨道 0: 使用 AAC 格式通用输出模块。</div>
<div class="t" style="left:2px;top:20px;letter-spacing:.3px">警告: matroska_reader: 无法保留轨道 UID 2323523239255098760，因为它已被指派给了新文件。</div>
<div class="t" style="left:2px;top:37px;letter-spacing:.39px">文件 'F:\庶务二课2013-1080p\[NOP] Shomuni 2013 (Power Office Girls 2013) - 10 [1080p] (1).mkv' 已以写入模式打</div>
<div class="t" style="left:2px;top:54px">开。</div>
<div class="a" style="left:655px;top:0;width:18px;height:98px;background:#fff"></div>
<div class="a" style="left:656px;top:63px;width:15px;height:17px;background:#cdcdcd"></div>
<svg style="left:659px;top:7px" width="9" height="6"><path d="M.8 5l3.700-3.700L8.200 5" stroke="#404040" stroke-width="1.500" fill="none"/></svg>
<svg style="left:659px;top:86px" width="9" height="6"><path d="M.8 1l3.700 3.700L8.200 1" stroke="#404040" stroke-width="1.500" fill="none"/></svg>
</div>
<div class="t" style="left:15px;top:293px">警告信息:</div>
<div class="a" style="left:15px;top:319px;width:675px;height:50px;background:#fff;border:1px solid #7a7a7a">
<svg style="left:659px;top:8px" width="9" height="6"><path d="M.8 5l3.700-3.700L8.200 5" stroke="#c4c4c4" stroke-width="1.500" fill="none"/></svg>
<svg style="left:659px;top:36px" width="9" height="6"><path d="M.8 1l3.700 3.700L8.200 1" stroke="#c4c4c4" stroke-width="1.500" fill="none"/></svg>
</div>
<div class="t" style="left:15px;top:381px">错误信息:</div>
<div class="a" style="left:15px;top:407px;width:675px;height:40px;background:#fff;border:1px solid #7a7a7a">
<svg style="left:659px;top:8px" width="9" height="6"><path d="M.8 5l3.700-3.700L8.200 5" stroke="#c4c4c4" stroke-width="1.500" fill="none"/></svg>
<svg style="left:659px;top:26px" width="9" height="6"><path d="M.8 1l3.700 3.700L8.200 1" stroke="#c4c4c4" stroke-width="1.500" fill="none"/></svg>
</div>
<div class="btn dis" style="left:116px;top:473px;width:86px;height:28px;line-height:26px">确定</div>
<div class="btn" style="left:309px;top:473px;width:86px;height:28px;line-height:26px">中断</div>
<div class="btn" style="left:502px;top:473px;width:86px;height:28px;line-height:26px">保存日志</div>
<svg style="left:693px;top:501px" width="10" height="10"><g fill="#b0b0b0"><rect x="7" y="1" width="2" height="2"/><rect x="4" y="4" width="2" height="2"/><rect x="7" y="4" width="2" height="2"/><rect x="1" y="7" width="2" height="2"/><rect x="4" y="7" width="2" height="2"/><rect x="7" y="7" width="2" height="2"/></g></svg>
</div>
<!-- ================= CHROME WINDOW ================= -->
<div class="a" id="chr" style="left:0;top:285px;width:756px;height:673px;background:#fff;border-right:1px solid #3f74a8;border-bottom:1px solid #5a94c8;border-top:1px solid #e8eefb;box-shadow:2px 2px 8px rgba(0,0,0,.25);overflow:hidden">
<div class="a" style="left:0;top:0;width:756px;height:39px;background:#d3e2fc"></div>
<div class="a" style="left:-10px;top:6px;width:50px;height:34px;background:#1f4b8d;border-radius:9px 9px 0 0"></div>
<svg style="left:39px;top:31px" width="9" height="9"><path d="M0 0v9h9Q0 9 0 0z" fill="#1f4b8d"/></svg>
<div class="t" style="left:-1px;top:10px;font-size:15px;color:#fff;line-height:18px;height:18px">活</div>
<div class="a" style="left:55px;top:11px;width:16px;height:16px;border-radius:4px;background:#1447e0"></div>
<svg style="left:58px;top:13px" width="11" height="12"><path d="M9 2.500A5 5 0 1 0 9 10 A4 4 0 1 1 9 2.500z" fill="#fff"/><path d="M4.500 3l.7 1.300 1.300.2-1 .9.300 1.300-1.300-.7z" fill="#fff" opacity=".6"/></svg>
<div class="t" style="left:79px;top:12px;font-size:12px;color:#2b2b2b;width:166px;overflow:hidden;-webkit-mask-image:linear-gradient(90deg,#000 85%,transparent)">捕风追影_magnet,torrent - 磁力</div>
<svg style="left:258px;top:14px" width="10" height="10"><path d="M1 1l7.500 7.500M8.500 1L1 8.500" stroke="#333" stroke-width="1.500"/></svg>
<div class="a" style="left:281px;top:12px;width:1px;height:16px;background:#a9b9d6"></div>
<svg style="left:292px;top:13px" width="12" height="12"><path d="M6 .5v11M.5 6h11" stroke="#333" stroke-width="1.500"/></svg>
<svg style="left:634px;top:13px" width="106" height="14"><path d="M1 7h10" stroke="#222" stroke-width="1.200"/><rect x="47.500" y="1.500" width="9" height="10" fill="none" stroke="#222" stroke-width="1.200"/><path d="M93 1.500l10 10M103 1.500l-10 10" stroke="#222" stroke-width="1.200"/></svg>
<!-- toolbar -->
<div class="a" style="left:0;top:39px;width:756px;height:81px;background:#fff;border-radius:0 8px 0 0"></div>
<svg style="left:-2px;top:53px" width="16" height="16"><path d="M1 4q3 8 12 0M1 8l-3 4M4 9h8" stroke="#333" stroke-width="1.600" fill="none"/></svg>
<svg style="left:22px;top:59px" width="8" height="5"><path d="M0 0h7L3.500 4z" fill="#333"/></svg>
<div class="a" style="left:47px;top:46px;width:595px;height:33px;border-radius:17px;background:#edf0f9"></div>
<div class="a" style="left:50px;top:50px;width:24px;height:24px;border-radius:12px;background:#fff"></div>
<svg style="left:55px;top:56px" width="14" height="13"><circle cx="3.500" cy="3" r="2" fill="none" stroke="#222" stroke-width="1.500"/><path d="M7.500 3H13M1 9.500h5.500" stroke="#222" stroke-width="1.600"/><circle cx="10.500" cy="9.500" r="2" fill="none" stroke="#222" stroke-width="1.500"/></svg>
<div class="t" style="left:82px;top:54px;font-size:14.500px;color:#2d2d2d;letter-spacing:.08px">115.com/?url=%2F%3Faid%3D1%26cid%3D0%26old_cid%3D0%26old_cid_n...</div>
<svg style="left:611px;top:54px" width="16" height="16"><path d="M8 1.500l2 4.400 4.700.5-3.500 3.200 1 4.700L8 11.900l-4.200 2.400 1-4.700L1.300 6.400 6 5.900z" fill="none" stroke="#333" stroke-width="1.500" stroke-linejoin="round"/></svg>
<div class="a" style="left:653px;top:48px;width:29px;height:29px;border-radius:50%;background:#dcdfe4"></div>
<svg style="left:659px;top:53px" width="18" height="18"><circle cx="4.500" cy="13" r="2.600" fill="none" stroke="#111" stroke-width="1.800"/><circle cx="13" cy="13" r="2.600" fill="none" stroke="#111" stroke-width="1.800"/><path d="M6 11L13 2M11 11Q5 6 3 4" stroke="#111" stroke-width="1.800" fill="none"/></svg>
<svg style="left:691px;top:53px" width="18" height="18"><path d="M2 5l3-3v15M11 1v15M8 12l3.500 4 3.500-4" stroke="#111" stroke-width="2" fill="none"/></svg>
<svg style="left:731px;top:52px" width="5" height="20"><circle cx="2.500" cy="3" r="1.600" fill="#222"/><circle cx="2.500" cy="10" r="1.600" fill="#222"/><circle cx="2.500" cy="17" r="1.600" fill="#222"/></svg>
<div class="a" style="left:738px;top:50px;width:8px;height:8px;border-radius:50%;background:#e8111a"></div>
<!-- bookmarks -->
<div class="t" style="left:-7px;top:92px;color:#444">生活</div>
<div class="a" style="left:36px;top:92px;width:16px;height:16px;border-radius:2px;background:#f08a24"></div>
<div class="t" style="left:40px;top:92px;color:#fff;font-weight:bold;font-size:13px">5</div>
<div class="t" style="left:58px;top:92px;color:#444">115管理</div>
<div class="t" style="left:119px;top:91px;color:#15439e;font-weight:bold;font-size:21px;-webkit-text-stroke:.6px #15439e;font-style:italic;line-height:18px">S</div>
<div class="t" style="left:142px;top:92px;color:#444">慢慢游社区 - 国语...</div>
<svg style="left:265px;top:92px" width="15" height="15"><circle cx="7.500" cy="7.500" r="6.300" fill="#fff" stroke="#444" stroke-width="1.600"/><path d="M2 6q3-3 5-1t-1 4 3 4q3-2 4-6-3-1-4-3-4-1-7 2z" fill="#444"/></svg>
<div class="t" style="left:288px;top:92px;color:#444;letter-spacing:-.1px">【新提醒】我爱看...</div>
<svg style="left:408px;top:91px" width="18" height="18"><path d="M3 2h11v3q0 6-5.500 7Q3 11 3 5z" fill="#f7b31b"/><path d="M1 3h3M13 3h3" stroke="#f7b31b" stroke-width="2"/><circle cx="14" cy="14" r="2" fill="none" stroke="#f7b31b"/></svg>
<div class="t" style="left:431px;top:92px;color:#444;letter-spacing:.3px">NORM TEAM论坛...</div>
<svg style="left:623px;top:95px" width="12" height="9"><path d="M1 .5l4 4-4 4M6.500.5l4 4-4 4" stroke="#333" stroke-width="1.500" fill="none"/></svg>
<div class="a" style="left:652px;top:91px;width:1px;height:18px;background:#d5dbe8"></div>
<svg style="left:668px;top:92px" width="18" height="15"><path d="M1.500 2.500h5l2 2h8v9h-15z" fill="none" stroke="#333" stroke-width="1.600" stroke-linejoin="round"/></svg>
<div class="t" style="left:693px;top:92px;color:#444">所有书签</div>
<div class="a" style="left:0;top:119px;width:756px;height:1px;background:#dcdcdc"></div>
<!-- page header -->
<div class="t" style="left:-8px;top:139px;font-size:21px;color:#222;line-height:24px;height:24px">盘</div>
<div class="t" style="left:53px;top:141px;font-size:16px;color:#999;line-height:20px;height:20px">备份</div>
<div class="t" style="left:125px;top:141px;font-size:16px;color:#999;line-height:20px;height:20px">密档</div>
<div class="t" style="left:197px;top:141px;font-size:16px;color:#999;line-height:20px;height:20px">记事</div>
<div class="a" style="left:328px;top:135px;width:360px;height:31px;border-radius:16px;background:#f1f3f6"></div>
<svg style="left:340px;top:143px" width="16" height="16"><circle cx="6.500" cy="6.500" r="5.300" fill="none" stroke="#888" stroke-width="1.500"/><path d="M10.500 10.500l4 4" stroke="#888" stroke-width="1.600"/></svg>
<div class="t" style="left:363px;top:142px;font-size:14px;color:#222;line-height:18px;height:18px">新世界</div>
<div class="a" style="left:664px;top:142px;width:16px;height:16px;border-radius:50%;background:#9c9c9c"></div>
<svg style="left:668px;top:146px" width="8" height="8"><path d="M1 1l6 6M7 1L1 7" stroke="#fff" stroke-width="1.800"/></svg>
<div class="a" style="left:708px;top:135px;width:70px;height:31px;border-radius:16px;background:#2d6ae6"></div>
<svg style="left:712px;top:139px" width="22" height="22"><path d="M3 17l9-9 4-5 4 4-5 4-9 9z" fill="#dfe9ff"/><circle cx="4" cy="18" r="3" fill="#fff"/></svg>
<div class="t" style="left:733px;top:142px;font-size:14px;color:#fff;font-weight:bold;line-height:18px;height:18px">小程序</div>
<!-- tabs -->
<div class="a" style="left:41px;top:193px;width:33px;height:33px;border:1px solid #ddd;border-radius:4px;background:#fff"></div>
<svg style="left:52px;top:203px" width="10" height="14"><path d="M8 1L2 7l6 6" stroke="#222" stroke-width="2" fill="none"/></svg>
<div class="t ct" style="left:102px;color:#222">文件</div>
<div class="t ct" style="left:160px">相册</div>
<div class="t ct" style="left:218px">通讯录</div>
<div class="t ct" style="left:291px">传说</div>
<div class="t ct" style="left:349px">话题</div>
<div class="t ct" style="left:407px">标签</div>
<div class="t ct" style="left:465px">帖子</div>
<div class="t ct" style="left:523px">社区</div>
<div class="t ct" style="left:581px">老乡</div>
<div class="t ct" style="left:639px">日程</div>
<div class="t ct" style="left:697px">记事</div>
<div class="a" style="left:102px;top:231px;width:30px;height:3px;border-radius:2px;background:#1b1b2a"></div>
<div class="a" style="left:0;top:235px;width:756px;height:1px;background:#ececec"></div>
<!-- breadcrumb -->
<div class="t" style="left:61px;top:255px;color:#2a6cb8">根目录</div>
<svg style="left:103px;top:258px" width="6" height="9"><path d="M1 .5l4 4-4 4" stroke="#888" stroke-width="1.200" fill="none"/></svg>
<div class="t" style="left:117px;top:254px;color:#666;font-size:13px">›搜索：</div>
<div class="a" style="left:164px;top:246px;width:42px;height:32px;border-radius:3px;background:#cdcdcd"></div>
<svg style="left:164px;top:246px" width="42" height="32"><path d="M6 3l30 26M36 3L6 29" stroke="#e6e6e6" stroke-width="1.200"/></svg>
<div class="t" style="left:173px;top:255px;color:#f4f4f4">全部</div>
<div class="a" style="left:216px;top:246px;width:61px;height:32px;border-radius:3px;background:#2777f8"></div>
<div class="t" style="left:232px;top:255px;color:#fff">不限</div>
<svg style="left:260px;top:259px" width="8" height="6"><path d="M0 0h7L3.500 5z" fill="#fff"/></svg>
<!-- header row -->
<div class="cb" style="top:301px"></div>
<div class="t" style="left:92px;top:301px;color:#333">文件名</div>
<div class="t" style="left:138px;top:301px;color:#333;font-size:12px">当前共26个文件，4个文件夹</div>
<div class="a hl" style="top:332px"></div>
<!-- rows -->
<div class="cb" style="top:361px"></div>
<svg style="left:92px;top:356px" width="30" height="26"><use href="#fold"/></svg>
<div class="t fn" style="top:359px">妻子的<b>新世界</b>2023</div>
<div class="t fk" style="top:361px">文件夹</div><div class="t fd" style="top:361px">2023-09-02 00:04</div>
<div class="t" style="left:712px;top:357px;color:#555">网剧</div>
<div class="a ic" style="top:358px"></div>
<div class="a hl" style="top:396px"></div>
<div class="cb" style="top:419px"></div>
<svg style="left:92px;top:414px" width="30" height="26"><use href="#fold"/></svg>
<div class="t fn" style="top:418px">外婆的<b>新世界</b>2023</div>
<div class="t fk" style="top:420px">文件夹</div><div class="t fd" style="top:420px">2023-08-22 19:51</div>
<div class="t" style="left:712px;top:419px;color:#555">国剧</div>
<div class="a ic" style="top:419px"></div>
<div class="a hl" style="top:456px"></div>
<div class="cb" style="top:479px"></div>
<svg style="left:92px;top:474px" width="30" height="26"><use href="#fold"/></svg>
<div class="t fn" style="top:478px">【14】【<b>新世界</b>前篇】【国日双...</div>
<div class="t fk" style="top:480px">文件夹</div><div class="t fd" style="top:480px">2021-12-30 23:20</div>
<div class="t" style="left:712px;top:479px;color:#555">海贼王1</div>
<div class="a hl" style="top:516px"></div>
<div class="t fn" style="top:538px;left:313px">o.W...</div>
<div class="t fk" style="top:540px">文件夹</div><div class="t fd" style="top:540px">2020-03-01 12:30</div>
<div class="t" style="left:724px;top:539px;color:#555">剧</div>
<div class="a ic" style="top:539px"></div>
<div class="a hl" style="top:576px"></div>
<div class="t fn" style="top:594px;left:327px">W...</div>
<div class="t fk" style="top:597px;left:515px">…</div>
<div class="a ic" style="top:596px"></div>
<!-- footer -->
<div class="a" style="left:0;top:603px;width:756px;height:52px;background:#fff;border-top:1px solid #eee"></div>
<div class="t" style="left:296px;top:620px;font-size:14px;color:#999;line-height:18px;height:18px">当前共26个文件，4个文件夹</div>
<!-- scrollbar -->
<div class="a" style="left:0;top:655px;width:756px;height:17px;background:#f1f1f1"></div>
<div class="a" style="left:0;top:657px;width:512px;height:13px;background:#c1c1c1"></div>
<svg style="left:743px;top:659px" width="6" height="9"><path d="M.5.500l4.500 4-4.500 4z" fill="#333"/></svg>
<!-- ad -->
<div class="a" style="left:627px;top:522px;width:101px;height:86px;border-radius:7px;background:linear-gradient(160deg,#2f7df0,#2563d8)"></div>
<div class="t" style="left:632px;top:534px;font-size:28px;font-weight:900;color:#fff;line-height:32px;height:32px;letter-spacing:2px;text-shadow:1px 1px 0 #1847a8">小程序</div>
<div class="t" style="left:632px;top:567px;font-size:21px;font-weight:900;color:#d4ecff;line-height:26px;height:26px;letter-spacing:2px">重磅升级</div>
<div class="a" style="left:623px;top:602px;width:109px;height:25px;border-radius:13px;background:linear-gradient(90deg,#f0352b,#f9913a)"></div>
<div class="t" style="left:635px;top:604px;font-size:18.500px;font-weight:bold;color:#fff;line-height:22px;height:22px;letter-spacing:3px">立即体验</div>
<div class="a" style="left:710px;top:523px;width:14px;height:14px;border-radius:50%;background:#12264a"></div>
<svg style="left:714px;top:527px" width="6" height="6"><path d="M.5.500l5 5M5.500.5l-5 5" stroke="#fff" stroke-width="1.600"/></svg>
<!-- popup -->
<div class="a" style="left:-20px;top:514px;width:333px;height:148px;border-radius:10px;background:#fff;box-shadow:0 1px 8px rgba(0,0,0,.22)"></div>
<div class="a" style="left:-11px;top:529px;width:16px;height:16px;border-radius:50%;background:#ef3b4a"></div>
<svg style="left:14px;top:531px" width="12" height="11"><rect x=".5" y="1" width="11" height="9" rx="2" fill="#f6c21b" stroke="#8a6200" stroke-width=".8"/><path d="M3 5.500h6" stroke="#8a6200" stroke-dasharray="1 1"/></svg>
<div class="t" style="left:31px;top:529px;color:#555;font-size:11px">重磅升级</div>
<div class="a" style="left:193px;top:526px;width:73px;height:23px;border-radius:12px;background:linear-gradient(90deg,#fbd03a,#f6b424)"></div>
<div class="t" style="left:199px;top:529px;color:#8a5200;font-size:11px">VIP专享权益</div>
<svg style="left:295px;top:526px" width="8" height="8"><path d="M.5.500l6.500 6.500M7 .5L.5 7" stroke="#777" stroke-width="1"/></svg>
<div class="t" style="left:-5px;top:557px;font-size:14px;color:#555;line-height:21px;height:21px"><span style="margin-left:6px;margin-right:-6px">！</span>感谢你长久以来的支持与陪伴。今天，我们怀</div>
<div class="t" style="left:-18px;top:578px;font-size:14px;color:#555;line-height:21px;height:21px">激动的心情向你宣布：我们的小程序迎来了一次简</div>
<div class="t" style="left:-15px;top:599px;font-size:14px;color:#555;line-height:21px;height:21px">单蜕变！</div>
<div class="t" style="left:220px;top:629px;font-size:14px;color:#2a7ad0;line-height:18px;height:18px">了解详情 &gt;</div>
</div>
<!-- ================= TASKBAR ================= -->
<div class="a" id="tb" style="left:0;top:1039px;width:1823px;height:22px;background:#04070f;overflow:hidden">
<div class="a" style="left:0;top:0;width:26px;height:22px;background:#1d232e"></div>
<svg style="left:-3px;top:5px" width="20" height="20"><circle cx="9" cy="10" r="8" fill="#35b6e6"/><path d="M2 10q4-6 12-3M3 14q6-5 13-1" stroke="#fff" stroke-width="1.800" fill="none"/></svg>
<svg style="left:40px;top:9px" width="24" height="14"><path d="M1 3h7l2 2h12v9H1z" fill="#f4d271"/><rect x="4" y="8" width="15" height="6" fill="#7cc4ea"/></svg>
<div class="a" style="left:82px;top:0;width:39px;height:22px;background:#252a33"></div>
<div class="a" style="left:82px;top:0;width:3px;height:22px;background:#2e7d32"></div>
<svg style="left:96px;top:8px" width="14" height="14"><circle cx="7" cy="9" r="5" fill="#e9e9f0"/><circle cx="9" cy="3" r="2" fill="#d02030"/></svg>
<svg style="left:1525px;top:14px" width="14" height="8"><rect x="1" y="2" width="10" height="6" fill="#3fb43f"/><rect x="3" y="0" width="6" height="2" fill="#dfe"/></svg>
<svg style="left:1553px;top:14px" width="12" height="8"><path d="M1 7l5-5 5 5" stroke="#fff" stroke-width="1.500" fill="none"/></svg>
<svg style="left:1575px;top:12px" width="18" height="18"><circle cx="8" cy="8" r="7.500" fill="#f2d41a"/><path d="M8 4v8M4 8h8" stroke="#1f8f2f" stroke-width="2.200"/></svg>
<svg style="left:1598px;top:13px" width="16" height="10"><path d="M2 10a8 8 0 0 1 12-6M5 10a5 5 0 0 1 8-3" stroke="#eee" stroke-width="1.500" fill="none"/></svg>
<svg style="left:1622px;top:13px" width="16" height="16"><circle cx="8" cy="8" r="7" fill="#8a8a8a"/><path d="M5 5l6 6M11 5l-6 6" stroke="#222" stroke-width="2"/></svg>
<svg style="left:1649px;top:13px" width="16" height="16"><circle cx="8" cy="8" r="7.500" fill="#2f6fc2"/></svg>
<div class="t" style="left:1652px;top:15px;color:#fff;font-size:9px;font-weight:bold">拼</div>
<div class="t" style="left:1726px;top:2px;color:#fff;font-size:12.500px">23:01:55</div>
</div>
<!-- watermark -->
<div class="t" style="left:1337px;top:968px;font-size:41px;line-height:48px;height:48px;color:rgba(255,255,255,.93);letter-spacing:1.100px;font-weight:300">cdslian1985@多看聚</div>
</body></html>
